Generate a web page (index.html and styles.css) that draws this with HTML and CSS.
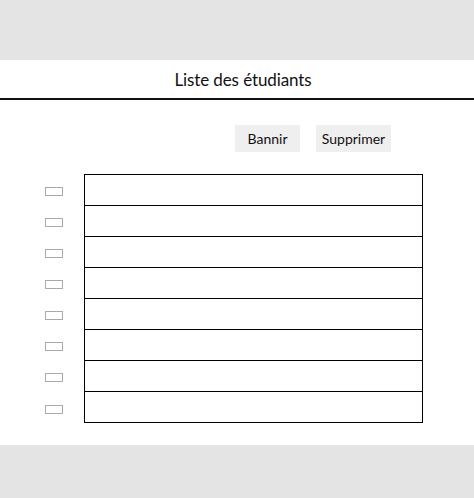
FILE: index.html
```html
<!DOCTYPE html>
<html lang="fr">
<head>
<meta charset="utf-8">
<title>Liste des étudiants</title>
<link rel="stylesheet" href="styles.css">
</head>
<body>
<div class="top-space"></div>
<main class="panel">
  <header class="header"><h1 class="title">Liste des étudiants</h1></header>
  <div class="actions">
    <button class="btn btn-ban">Bannir</button>
    <button class="btn btn-del">Supprimer</button>
  </div>
  <div class="list">
    <div class="row"><span class="check"></span><div class="cell"></div></div>
    <div class="row"><span class="check"></span><div class="cell"></div></div>
    <div class="row"><span class="check"></span><div class="cell"></div></div>
    <div class="row"><span class="check"></span><div class="cell"></div></div>
    <div class="row"><span class="check"></span><div class="cell"></div></div>
    <div class="row"><span class="check"></span><div class="cell"></div></div>
    <div class="row"><span class="check"></span><div class="cell"></div></div>
    <div class="row last"><span class="check"></span><div class="cell"></div></div>
  </div>
</main>
</body>
</html>
```
FILE: styles.css
```css
* { box-sizing: border-box; }
html, body { margin: 0; padding: 0; }
body {
  background: #e4e4e4;
  font-family: Lato, "Open Sans", sans-serif;
  color: #111;
  width: 474px;
  height: 498px;
}
.top-space { height: 60px; }
.panel {
  background: #fff;
  height: 385px;
  display: flex;
  flex-direction: column;
}
.header {
  height: 40px;
  border-bottom: 2px solid #111;
  display: flex;
  align-items: center;
  justify-content: center;
  padding-left: 12px;
}
.title {
  margin: 0;
  font-weight: 400;
  font-size: 17px;
  line-height: 20px;
  padding-top: 2px;
  letter-spacing: -0.1px;
}
.actions {
  margin-top: 25px;
  padding-left: 235px;
  display: flex;
  gap: 16px;
}
.btn {
  height: 27px;
  border: 0;
  background: #efefef;
  font-family: Lato, "Open Sans", sans-serif;
  font-size: 14px;
  color: #111;
  padding: 0;
  text-align: center;
}
.btn-ban { width: 65px; }
.btn-del { width: 75px; }
.list {
  margin-top: 22px;
  display: flex;
  flex-direction: column;
}
.row {
  display: flex;
  align-items: center;
  height: 31px;
}
.row.last { height: 32px; }
.check {
  width: 18px;
  height: 9px;
  border: 1px solid #aaa;
  margin-left: 45px;
  margin-right: 21px;
  margin-top: 4px;
}
.cell {
  width: 339px;
  height: 100%;
  border-left: 1px solid #000;
  border-right: 1px solid #000;
  border-top: 1px solid #000;
}
.row.last .cell { border-bottom: 1px solid #000; }
```
